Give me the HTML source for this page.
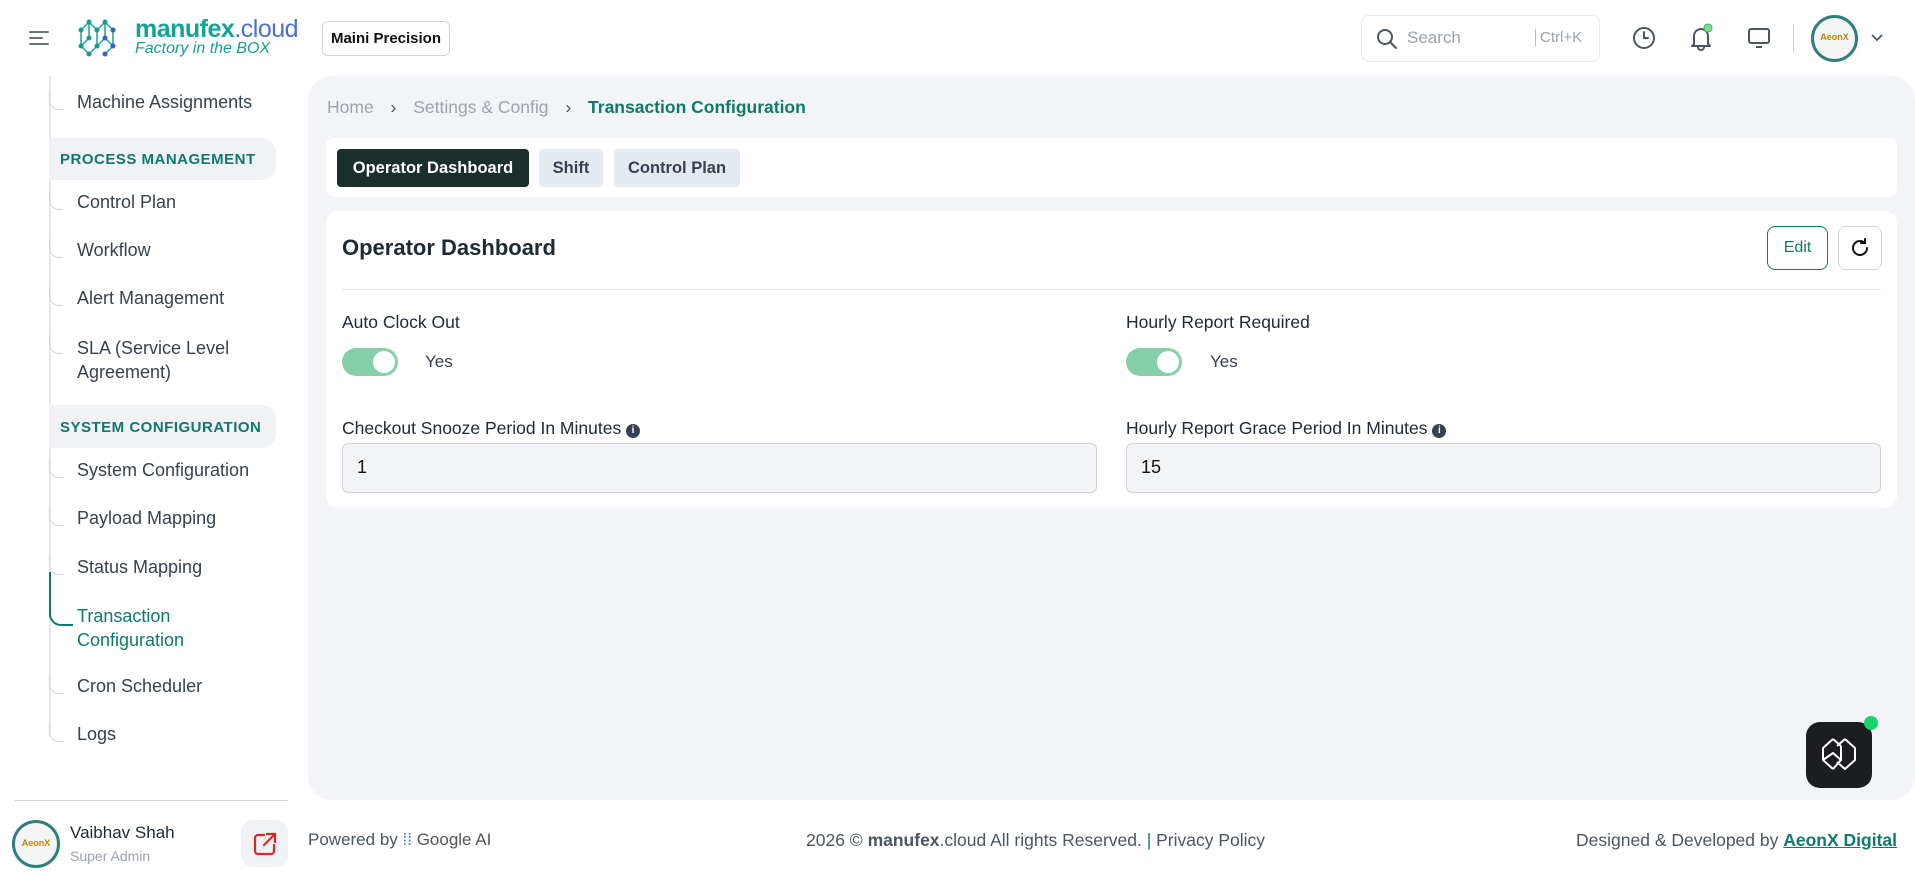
<!DOCTYPE html>
<html><head><meta charset="utf-8"><style>
*{box-sizing:border-box;margin:0;padding:0}
body{width:1915px;height:876px;overflow:hidden;background:#fff;font-family:"Liberation Sans",sans-serif;color:#1f2937;position:relative}
.a{position:absolute;white-space:nowrap}
.side{font-size:18px;color:#374151}
.hdr{background:#f0f2f5;border-radius:0 14px 14px 0;color:#0f7a6a;font-weight:bold;font-size:15px;letter-spacing:.5px}
.lbl{font-size:17.5px;color:#1f2937}
.inp{background:#f3f4f6;border:1px solid #d1d5db;border-radius:6px;font-size:18px;color:#111;padding:13px 14px}
.tog{width:56px;height:28px;border-radius:14px;background:#86cfa8}
.tog:after{content:"";position:absolute;right:3px;top:3px;width:22px;height:22px;border-radius:50%;background:#fff}
.tab{height:38px;border-radius:4px;font-size:16.5px;font-weight:bold;line-height:38px;text-align:center;background:#e5eaf0;color:#374151}
.br{width:14px;height:20px;border-left:1.5px solid #d1d5db;border-bottom:1.5px solid #d1d5db;border-bottom-left-radius:10px}
</style></head><body>
<!-- header -->
<svg class="a" style="left:29px;top:30px" width="20" height="16"><path d="M1 2h18M1 8h12M1 14h18" stroke="#6b7280" stroke-width="2" stroke-linecap="round"/></svg>
<svg class="a" style="left:77px;top:18px" width="50" height="40" viewBox="0 0 50 40"><g stroke="#1aa39a" stroke-width="1.5" fill="none"><path d="M4 12L12 4 20 12 28 4 36 12V28L28 36M4 12V28L12 36 20 28V12M12 4V20L4 28M20 28L28 20 36 28M28 4V20"/></g><g fill="#159e95"><circle cx="4" cy="12" r="2.5"/><circle cx="12" cy="4" r="2.5"/><circle cx="20" cy="12" r="2.5"/><circle cx="28" cy="4" r="2.5"/><circle cx="12" cy="20" r="2.5"/><circle cx="4" cy="28" r="2.5"/><circle cx="12" cy="36" r="2.5"/><circle cx="20" cy="28" r="2.5"/></g><g fill="#3b5bd6"><circle cx="36" cy="12" r="2.5"/><circle cx="36" cy="28" r="2.5"/><circle cx="28" cy="36" r="2.5"/><circle cx="28" cy="20" r="2.5"/></g></svg>
<div class="a" style="left:135px;top:15px;font-size:25px;line-height:28px;color:#12a396;font-weight:bold;letter-spacing:-.5px">manufex<span style="font-weight:normal;color:#4a6fd8">.cloud</span></div>
<div class="a" style="left:135px;top:40px;font-size:16px;font-style:italic;color:#14a098">Factory in the BOX</div>
<div class="a" style="left:322px;top:21px;width:128px;height:35px;border:1px solid #d1d5db;border-radius:6px;font-size:15px;font-weight:bold;color:#111;line-height:33px;text-align:center">Maini Precision</div>
<div class="a" style="left:1361px;top:15px;width:239px;height:47px;border:1px solid #e5e7eb;border-radius:8px"></div>
<svg class="a" style="left:1376px;top:28px" width="22" height="22"><circle cx="9" cy="9" r="7" stroke="#4b5563" stroke-width="2" fill="none"/><path d="M14 14l6 6" stroke="#4b5563" stroke-width="2" stroke-linecap="round"/></svg>
<div class="a" style="left:1407px;top:28px;font-size:17px;color:#9ca3af">Search</div>
<div class="a" style="left:1535px;top:29px;font-size:15px;color:#9ca3af;border-left:1px solid #f0a0a0;padding-left:4px">Ctrl+K</div>
<svg class="a" style="left:1632px;top:26px" width="24" height="24"><circle cx="12" cy="12" r="10" stroke="#4b5563" stroke-width="2" fill="none"/><path d="M12 6v6h4" stroke="#4b5563" stroke-width="2" fill="none" stroke-linecap="round"/></svg>
<svg class="a" style="left:1688px;top:22px" width="26" height="30"><path d="M6 22V14a7 7 0 0114 0v8l2 2H4z M10 25a3 3 0 006 0" stroke="#4b5563" stroke-width="2" fill="none" stroke-linejoin="round"/><circle cx="20" cy="6" r="4" fill="#7ddc8c" stroke="#3bb26a"/></svg>
<svg class="a" style="left:1748px;top:28px" width="22" height="20"><rect x="1" y="1" width="20" height="14" rx="2" stroke="#4b5563" stroke-width="2" fill="none"/><path d="M8 19h6" stroke="#4b5563" stroke-width="2"/></svg>
<div class="a" style="left:1793px;top:24px;width:1px;height:29px;background:#d1d5db"></div>
<div class="a" style="left:1811px;top:15px;width:47px;height:47px;border-radius:50%;border:3px solid #2f7f7a;background:#f5f5f5;font-size:9px;text-align:center;line-height:38px;color:#b8860b;font-weight:bold">AeonX</div>
<svg class="a" style="left:1870px;top:33px" width="14" height="10"><path d="M2 2l5 5 5-5" stroke="#4b5563" stroke-width="1.8" fill="none"/></svg>
<!-- sidebar -->
<div class="a" style="left:49px;top:76px;width:2px;height:660px;background:#e5e7eb"></div>
<div class="a br" style="left:49px;top:90px"></div><div class="a side" style="left:77px;top:92px">Machine Assignments</div>
<div class="a hdr" style="left:49px;top:138px;width:227px;height:42px;padding:13px 0 0 11px">PROCESS MANAGEMENT</div>
<div class="a br" style="left:49px;top:190px"></div><div class="a side" style="left:77px;top:192px">Control Plan</div>
<div class="a br" style="left:49px;top:238px"></div><div class="a side" style="left:77px;top:240px">Workflow</div>
<div class="a br" style="left:49px;top:286px"></div><div class="a side" style="left:77px;top:288px">Alert Management</div>
<div class="a br" style="left:49px;top:334px"></div><div class="a side" style="left:77px;top:336px;line-height:24px">SLA (Service Level<br>Agreement)</div>
<div class="a hdr" style="left:49px;top:405px;width:227px;height:43px;padding:14px 0 0 11px">SYSTEM CONFIGURATION</div>
<div class="a br" style="left:49px;top:458px"></div><div class="a side" style="left:77px;top:460px">System Configuration</div>
<div class="a br" style="left:49px;top:506px"></div><div class="a side" style="left:77px;top:508px">Payload Mapping</div>
<div class="a br" style="left:49px;top:555px"></div><div class="a side" style="left:77px;top:557px">Status Mapping</div>
<div class="a" style="left:49px;top:572px;width:24px;height:54px;border-left:2px solid #0f7a6a;border-bottom:2px solid #0f7a6a;border-bottom-left-radius:12px"></div>
<div class="a side" style="left:77px;top:604px;line-height:24px;color:#0f7a6a">Transaction<br>Configuration</div>
<div class="a br" style="left:49px;top:674px"></div><div class="a side" style="left:77px;top:676px">Cron Scheduler</div>
<div class="a br" style="left:49px;top:722px"></div><div class="a side" style="left:77px;top:724px">Logs</div>
<div class="a" style="left:15px;top:800px;width:273px;height:1px;background:#d1d5db"></div>
<div class="a" style="left:12px;top:820px;width:48px;height:48px;border-radius:50%;border:3px solid #2f7f7a;background:#f5f5f5;font-size:9px;text-align:center;line-height:40px;color:#b8860b;font-weight:bold">AeonX</div>
<div class="a" style="left:70px;top:823px;font-size:17px;color:#1f2937">Vaibhav Shah</div>
<div class="a" style="left:70px;top:848px;font-size:14px;color:#9ca3af">Super Admin</div>
<div class="a" style="left:241px;top:820px;width:47px;height:47px;border-radius:12px;background:#f0f2f5"></div>
<svg class="a" style="left:252px;top:831px" width="26" height="26"><path d="M12 4H6a3 3 0 00-3 3v13a3 3 0 003 3h13a3 3 0 003-3v-6M15 3h8v8M23 3L12 14" stroke="#dc2626" stroke-width="2.2" fill="none" stroke-linecap="round"/></svg>
<!-- main -->
<div class="a" style="left:308px;top:76px;width:1607px;height:724px;background:#f3f4f7;border-radius:24px"></div>
<div class="a" style="left:327px;top:97px;font-size:17.5px;color:#9ca3af">Home <span style="color:#4b5563;margin:0 12px">›</span> Settings &amp; Config <span style="color:#4b5563;margin:0 12px">›</span> <span style="color:#0f7a6a;font-weight:bold">Transaction Configuration</span></div>
<div class="a" style="left:326px;top:138px;width:1571px;height:59px;background:#fff;border-radius:8px"></div>
<div class="a tab" style="left:337px;top:149px;width:192px;background:#1a2e2b;color:#fff">Operator Dashboard</div>
<div class="a tab" style="left:539px;top:149px;width:64px">Shift</div>
<div class="a tab" style="left:614px;top:149px;width:126px">Control Plan</div>
<div class="a" style="left:326px;top:211px;width:1571px;height:297px;background:#fff;border-radius:12px"></div>
<div class="a" style="left:342px;top:235px;font-size:22px;font-weight:bold;color:#1f2937">Operator Dashboard</div>
<div class="a" style="left:1767px;top:226px;width:61px;height:44px;border:1px solid #0f7a6a;border-radius:8px;color:#0f7a6a;font-size:16px;line-height:42px;text-align:center">Edit</div>
<div class="a" style="left:1838px;top:226px;width:44px;height:44px;border:1px solid #d1d5db;border-radius:8px"></div>
<svg class="a" style="left:1849px;top:237px" width="22" height="22"><path d="M18 11a7 7 0 11-2.5-5.4M16 2v4h-4" stroke="#111" stroke-width="2" fill="none" stroke-linecap="round"/></svg>
<div class="a" style="left:342px;top:289px;width:1539px;height:1px;background:#e5e7eb"></div>
<div class="a lbl" style="left:342px;top:312px">Auto Clock Out</div>
<div class="a tog" style="left:342px;top:348px"></div><div class="a" style="left:425px;top:352px;font-size:17px;color:#374151">Yes</div>
<div class="a lbl" style="left:1126px;top:312px">Hourly Report Required</div>
<div class="a tog" style="left:1126px;top:348px"></div><div class="a" style="left:1210px;top:352px;font-size:17px;color:#374151">Yes</div>
<div class="a lbl" style="left:342px;top:418px">Checkout Snooze Period In Minutes <span style="display:inline-block;width:14px;height:14px;border-radius:50%;background:#374151;color:#fff;font-size:10px;line-height:14px;text-align:center;font-weight:bold;vertical-align:1px">i</span></div>
<div class="a lbl" style="left:1126px;top:418px">Hourly Report Grace Period In Minutes <span style="display:inline-block;width:14px;height:14px;border-radius:50%;background:#374151;color:#fff;font-size:10px;line-height:14px;text-align:center;font-weight:bold;vertical-align:1px">i</span></div>
<div class="a inp" style="left:342px;top:443px;width:755px;height:50px">1</div>
<div class="a inp" style="left:1126px;top:443px;width:755px;height:50px">15</div>
<div class="a" style="left:1806px;top:722px;width:66px;height:66px;border-radius:14px;background:#1c1d20"></div>
<svg class="a" style="left:1819px;top:735px" width="40" height="40" viewBox="0 0 40 40"><path d="M14 4l-10 9v12l10 9M14 4l8 7M22 11v14l-8 9M26 4l10 9v12l-10 9-8-7M26 4l-8 7M4 25l10-7 8 7" stroke="#fff" stroke-width="2" fill="none" stroke-linejoin="round"/></svg>
<div class="a" style="left:1864px;top:716px;width:14px;height:14px;border-radius:50%;background:#16d36a"></div>
<!-- footer -->
<div class="a" style="left:308px;top:830px;font-size:17px;color:#4b5563">Powered by <span style="color:#2b7de9">⁞⁞</span> <span style="color:#555">Google AI</span></div>
<div class="a" style="left:806px;top:830px;font-size:17.5px;color:#4b5563">2026 © <b>manufex</b>.cloud All rights Reserved. <span style="color:#0f7a6a">|</span> Privacy Policy</div>
<div class="a" style="right:18px;top:830px;font-size:17.5px;color:#4b5563">Designed &amp; Developed by <b style="color:#0f7a6a;text-decoration:underline">AeonX Digital</b></div>
</body></html>
